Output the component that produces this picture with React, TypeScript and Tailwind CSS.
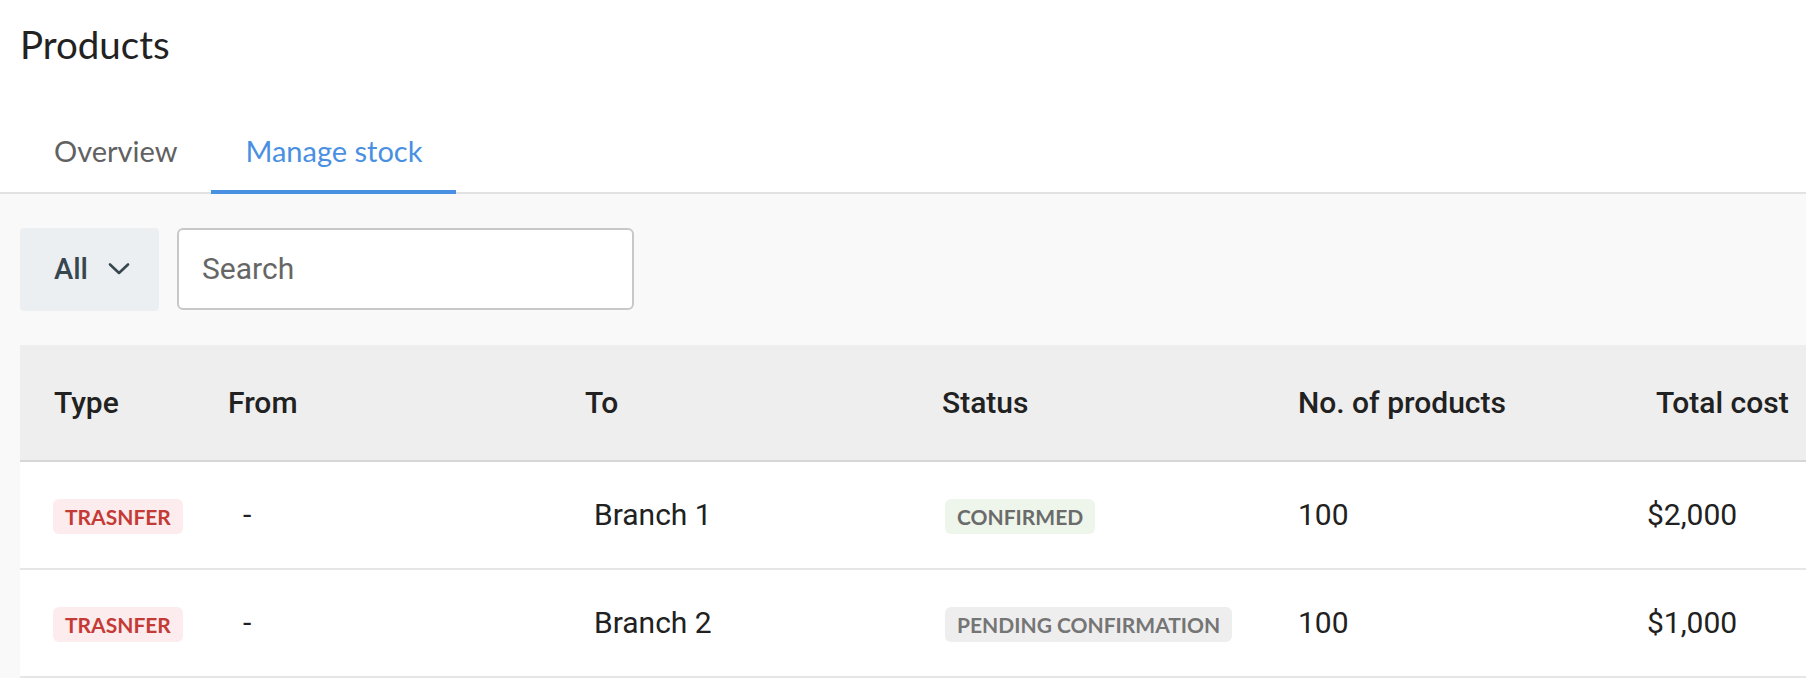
import React from 'react';

const lato = "font-['Lato','Liberation_Sans',sans-serif]";
const roboto = "font-['Roboto','Liberation_Sans',sans-serif]";

type Row = {
  to: string;
  status: 'confirmed' | 'pending';
  count: string;
  cost: string;
};

const rows: Row[] = [
  { to: 'Branch 1', status: 'confirmed', count: '100', cost: '$2,000' },
  { to: 'Branch 2', status: 'pending', count: '100', cost: '$1,000' },
];

function Badge({ tone, children }: { tone: 'red' | 'green' | 'gray'; children: React.ReactNode }) {
  const tones = {
    red: 'bg-[#fdeced] text-[#c43b36]',
    green: 'bg-[#eef6ec] text-[#6b6b6b]',
    gray: 'bg-[#eeeeee] text-[#757575]',
  };
  return (
    <span
      className={`inline-flex h-[35px] items-center rounded-[6px] px-[12px] text-[21px] font-bold leading-none ${lato} ${tones[tone]}`}
    >
      {children}
    </span>
  );
}

export default function App() {
  return (
    <div className="flex min-h-screen w-full flex-col overflow-hidden bg-[#f9f9f9]">
      {/* Page header + tabs */}
      <div className="bg-white">
        <h1 className={`pl-[20px] pt-[21px] text-[38.5px] font-normal leading-[1.2] text-[#222222] ${lato}`}>
          Products
        </h1>
        <div className="mt-[46px] flex border-b-2 border-[#e2e2e2] pl-[20px]">
          <button className={`-mb-[2px] border-b-4 border-transparent px-[34px] pb-[21px] pt-[21px] text-[29px] leading-[1.2] text-[#616161] ${lato}`}>
            Overview
          </button>
          <button className={`-mb-[2px] border-b-4 border-[#4a90e2] px-[34px] pb-[21px] pt-[21px] text-[29px] leading-[1.2] text-[#4a90e2] ${lato}`}>
            Manage stock
          </button>
        </div>
      </div>

      {/* Filters */}
      <div className="flex gap-[18px] pl-[20px] pt-[34px]">
        <button className={`flex h-[83px] w-[139px] items-center gap-[20px] rounded-[4px] bg-[#eceff1] pl-[34px] text-[29px] font-medium text-[#37474f] ${roboto}`}>
          All
          <svg width="22" height="14" viewBox="0 0 22 14" fill="none">
            <path d="M2 2.5 L11 11 L20 2.5" stroke="#37474f" strokeWidth="2.6" strokeLinecap="round" strokeLinejoin="round" />
          </svg>
        </button>
        <input
          placeholder="Search"
          className={`h-[82px] w-[457px] rounded-[6px] border-2 border-[#c8c8c8] bg-white pl-[23px] text-[30px] text-[#333] outline-none placeholder:text-[#666666] ${roboto}`}
        />
      </div>

      {/* Table */}
      <div className={`ml-[20px] mt-[34px] ${roboto}`}>
        <div className="grid h-[117px] grid-cols-[174px_357px_357px_356px_358px_1fr] items-center border-b-2 border-[#d6d6d6] bg-[#eeeeee] pl-[34px] text-[30px] font-medium whitespace-nowrap text-[#212121]">
          <div>Type</div>
          <div>From</div>
          <div>To</div>
          <div>Status</div>
          <div>No. of products</div>
          <div>Total cost</div>
        </div>
        {rows.map((r) => (
          <div
            key={r.to}
            className="grid h-[108px] grid-cols-[190px_351px_351px_353px_349px_1fr] items-center border-b-2 border-[#e6e6e6] bg-white pl-[33px] text-[30px] whitespace-nowrap text-[#212121]"
          >
            <div>
              <Badge tone="red">TRASNFER</Badge>
            </div>
            <div>-</div>
            <div>{r.to}</div>
            <div>
              {r.status === 'confirmed' ? (
                <Badge tone="green">CONFIRMED</Badge>
              ) : (
                <Badge tone="gray">PENDING CONFIRMATION</Badge>
              )}
            </div>
            <div>{r.count}</div>
            <div>{r.cost}</div>
          </div>
        ))}
      </div>
    </div>
  );
}
